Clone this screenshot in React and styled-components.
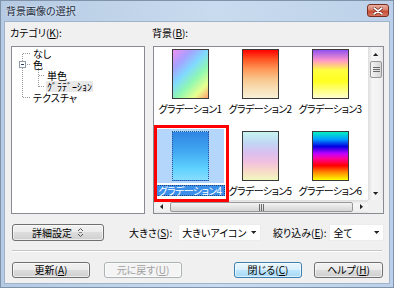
import styled, { createGlobalStyle } from 'styled-components';

const GlobalStyle = createGlobalStyle`
  html, body { margin: 0; padding: 0; }
  body {
    width: 394px;
    height: 288px;
    overflow: hidden;
    font-family: "Noto Sans CJK JP", "Noto Sans", sans-serif;
    font-size: 10px;
    font-feature-settings: "palt";
    color: #000;
  }
  * { box-sizing: border-box; }
`;

const Window = styled.div`
  width: 394px;
  height: 288px;
  display: flex;
  flex-direction: column;
  padding: 0 3px 3px 3px;
  border: 1px solid #7f93ab;
  background: linear-gradient(90deg, #b5cae3, #c9dbee 55%, #bcd1e9);
`;

const TitleBar = styled.div`
  height: 20px;
  display: flex;
  justify-content: space-between;
  align-items: flex-start;
`;

const Title = styled.div`
  padding-left: 2px;
  line-height: 19px;
  font-size: 10px;
  color: #1c2b3d;
  text-shadow: 0 0 3px rgba(255, 255, 255, 0.8);
`;

const CloseButton = styled.div`
  width: 22px;
  height: 13px;
  margin-top: 3px;
  margin-right: 1px;
  border: 1px solid #7a2c20;
  border-radius: 3px;
  background: linear-gradient(#eab0a2, #d9806d 45%, #c74b34 55%, #d8765f);
  display: flex;
  align-items: center;
  justify-content: center;
`;

const Client = styled.div`
  flex: 1;
  display: flex;
  flex-direction: column;
  background: #f0f0f0;
  border: 1px solid #9fb3cb;
  padding: 4px 5px 0 6px;
`;

const TopSection = styled.div`
  display: flex;
  gap: 8px;
`;

const Column = styled.div`
  display: flex;
  flex-direction: column;
  width: ${p => p.$w}px;
`;

const GroupLabel = styled.div`
  height: 13px;
  line-height: 13px;
  margin: 0 0 7px ${p => p.$ml || 0}px;
  white-space: nowrap;
`;

const TreeBox = styled.div`
  position: relative;
  height: 168px;
  border: 1px solid #898c95;
  background: #fff;
`;

const TreeLines = styled.svg`
  position: absolute;
  left: 0;
  top: 0;
`;

const TreeList = styled.ul`
  list-style: none;
  margin: 0;
  padding: 1px 0 0 0;
`;

const TreeItem = styled.li`
  height: 11px;
  line-height: 11px;
  padding-left: ${p => (p.$level === 1 ? 35 : 21)}px;
  white-space: nowrap;
`;

const TreeSelected = styled.span`
  display: inline-block;
  margin-left: -1px;
  padding: 0 1px;
  background: #e8e8e8;
`;

const ListBox = styled.div`
  position: relative;
  height: 168px;
  border: 1px solid #898c95;
  background: #fff;
  display: grid;
  grid-template-columns: 1fr 15px;
  grid-template-rows: 1fr 13px;
`;

const IconArea = styled.div`
  overflow: hidden;
  display: grid;
  grid-template-columns: repeat(3, 70px);
  row-gap: 15px;
  align-content: start;
  padding-left: 1px;
`;

const IconItem = styled.div`
  display: flex;
  flex-direction: column;
  align-items: center;
`;

const IconBox = styled.div`
  width: 67px;
  height: 54px;
  display: flex;
  align-items: center;
  justify-content: center;
  background: ${p => (p.$selected ? '#b4d6fa' : 'transparent')};
`;

const Thumb = styled.div`
  width: 37px;
  height: 50px;
  border: 1px ${p => (p.$selected ? 'dotted #1b3d8c' : 'solid #3a3a3a')};
  background: ${p => p.$bg};
  opacity: ${p => (p.$selected ? 0.85 : 1)};
`;

const IconLabel = styled.div`
  margin-top: 2px;
  height: 11px;
  line-height: 10px;
  padding: 0 2px;
  letter-spacing: -0.6px;
  white-space: nowrap;
  color: ${p => (p.$selected ? '#fff' : '#000')};
  background: ${p => (p.$selected ? '#3b8fe8' : 'transparent')};
  border: 1px dotted ${p => (p.$selected ? '#1a3f7a' : 'transparent')};
`;

const VScroll = styled.div`
  display: flex;
  flex-direction: column;
  background: linear-gradient(90deg, #e4e4e4, #f6f6f6 25%, #f1f1f1 80%, #e6e6e6);
  border-left: 1px solid #e0e0e0;
`;

const HScroll = styled.div`
  display: flex;
  background: linear-gradient(#e4e4e4, #f6f6f6 25%, #f1f1f1 80%, #e6e6e6);
  border-top: 1px solid #e0e0e0;
`;

const ArrowButton = styled.div`
  flex: 0 0 ${p => p.$size}px;
  display: flex;
  align-items: center;
  justify-content: center;
`;

const Track = styled.div`
  flex: 1;
`;

const ScrollThumb = styled.div`
  display: flex;
  align-items: center;
  justify-content: center;
  border: 1px solid #979797;
  border-radius: 2px;
  background: ${p =>
    p.$vertical
      ? 'linear-gradient(90deg, #f4f4f4, #e4e4e4 50%, #d6d6d6)'
      : 'linear-gradient(#f4f4f4, #e4e4e4 50%, #d6d6d6)'};
  ${p => (p.$vertical ? 'height: 17px; margin: 0 1px;' : 'flex: 1; margin: 1px 1px;')}
`;

const Corner = styled.div`
  background: #f0f0f0;
`;

const Annotation = styled.div`
  position: absolute;
  left: 0;
  top: 78px;
  width: 75px;
  height: 77px;
  border: 3px solid #ff0000;
  pointer-events: none;
`;

const ControlsRow = styled.div`
  display: flex;
  align-items: center;
  margin: 10px 0 0 1px;
  height: 17px;
`;

const Button = styled.div`
  width: ${p => p.$w}px;
  height: ${p => p.$h || 16}px;
  margin-left: ${p => p.$ml || 0}px;
  display: flex;
  align-items: center;
  justify-content: center;
  gap: 5px;
  border: 1px solid ${p => (p.$default ? '#3c7fb1' : p.$disabled ? '#adb2b5' : '#707070')};
  border-radius: 3px;
  color: ${p => (p.$disabled ? '#a0a0a0' : '#000')};
  background: ${p =>
    p.$default
      ? 'linear-gradient(#eaf6fd, #d9f0fc 50%, #bee6fd 50%, #a7d9f5)'
      : p.$disabled
        ? '#f4f4f4'
        : 'linear-gradient(#f2f2f2, #ebebeb 50%, #dddddd 50%, #cfcfcf)'};
  box-shadow: inset 0 0 0 1px rgba(255, 255, 255, 0.6);
  white-space: nowrap;
`;

const ButtonText = styled.span`
  line-height: 12px;
`;

const FieldLabel = styled.span`
  margin-left: ${p => p.$ml}px;
  white-space: nowrap;
`;

const Select = styled.div`
  width: ${p => p.$w}px;
  height: 17px;
  margin-left: ${p => p.$ml}px;
  display: flex;
  align-items: center;
  justify-content: space-between;
  padding: 0 4px 0 3px;
  background: #fff;
  border: 1px solid #ececec;
  white-space: nowrap;
`;

const Separator = styled.div`
  margin: 9px 2px 0 1px;
  border-top: 1px solid #c6c6c6;
  border-bottom: 1px solid #fff;
`;

const ButtonRow = styled.div`
  display: flex;
  margin: 10px 1px 0 1px;
`;

const Spacer = styled.div`
  flex: 1;
`;

const Tri = ({ dir }) => {
  const pts = {
    up: '0,4 3.5,0 7,4',
    down: '0,0 3.5,4 7,0',
    left: '4,0 0,3.5 4,7',
    right: '0,0 4,3.5 0,7',
  }[dir];
  const w = dir === 'up' || dir === 'down' ? 7 : 4;
  const h = dir === 'up' || dir === 'down' ? 4 : 7;
  return (
    <svg width={w * 0.75} height={h * 0.75} viewBox={`0 0 ${w} ${h}`}>
      <polygon points={pts} fill="#222" />
    </svg>
  );
};

const Grip = ({ vertical }) => (
  <svg width={vertical ? 7 : 5} height={vertical ? 5 : 7}>
    {[0, 2, 4].map(i =>
      vertical ? (
        <line key={i} x1="0" x2="7" y1={i + 0.5} y2={i + 0.5} stroke="#6b6b6b" />
      ) : (
        <line key={i} y1="0" y2="7" x1={i + 0.5} x2={i + 0.5} stroke="#6b6b6b" />
      ),
    )}
  </svg>
);

const items = [
  { name: 'グラデーション1', bg: 'linear-gradient(135deg, #f090f0 0%, #a8a0ff 22%, #80d8ff 42%, #90f8b0 62%, #e8ff90 82%, #ffa070 100%)' },
  { name: 'グラデーション2', bg: 'linear-gradient(180deg, #ff0000 0%, #ff5020 18%, #ff9858 40%, #f8c890 62%, #f8e0b8 82%, #f8f0d8 100%)' },
  { name: 'グラデーション3', bg: 'linear-gradient(180deg, #9050f0 0%, #ff98c8 22%, #ffff40 42%, #ffff20 65%, #ffffd0 100%)' },
  { name: 'グラデーション4', bg: 'linear-gradient(180deg, #1878e0 0%, #2ea0f0 40%, #50d0ff 75%, #80e0ff 100%)', selected: true },
  { name: 'グラデーション5', bg: 'linear-gradient(180deg, #c8f4f0 0%, #c0d8f4 22%, #d8c0f0 42%, #f0c0e0 62%, #f8d8c8 80%, #f0f8c0 100%)' },
  { name: 'グラデーション6', bg: 'linear-gradient(180deg, #00f0c0 0%, #00a0ff 15%, #0000e0 30%, #c000ff 45%, #ff00a0 55%, #ff0000 70%, #ff8000 83%, #ffff00 100%)' },
];

const dot = { stroke: '#9a9a9a', strokeDasharray: '1 1', shapeRendering: 'crispEdges' };

const App = () => (
  <>
    <GlobalStyle />
    <Window>
      <TitleBar>
        <Title>背景画像の選択</Title>
        <CloseButton>
          <svg width="10" height="8" viewBox="0 0 10 8">
            <path d="M1 1 L9 7 M9 1 L1 7" stroke="#5a1a10" strokeWidth="3" strokeLinecap="round" />
            <path d="M1 1 L9 7 M9 1 L1 7" stroke="#fff" strokeWidth="1.6" strokeLinecap="round" />
          </svg>
        </CloseButton>
      </TitleBar>
      <Client>
        <TopSection>
          <Column $w={134}>
            <GroupLabel $ml={-1}>カテゴリ(<u>K</u>):</GroupLabel>
            <TreeBox>
              <TreeLines width="40" height="60">
                <line x1="10.5" x2="10.5" y1="6.5" y2="50.5" {...dot} />
                <line x1="10.5" x2="19" y1="6.5" y2="6.5" {...dot} />
                <line x1="13" x2="19" y1="17.5" y2="17.5" {...dot} />
                <line x1="10.5" x2="19" y1="50.5" y2="50.5" {...dot} />
                <line x1="26.5" x2="26.5" y1="21" y2="39.5" {...dot} />
                <line x1="26.5" x2="33" y1="28.5" y2="28.5" {...dot} />
                <line x1="26.5" x2="33" y1="39.5" y2="39.5" {...dot} />
                <rect x="7.5" y="14.5" width="6" height="6" fill="#fff" stroke="#909aa8" shapeRendering="crispEdges" />
                <line x1="9" x2="12" y1="17.5" y2="17.5" stroke="#2a3a5a" shapeRendering="crispEdges" />
              </TreeLines>
              <TreeList>
                <TreeItem>なし</TreeItem>
                <TreeItem>色</TreeItem>
                <TreeItem $level={1}>単色</TreeItem>
                <TreeItem $level={1}>
                  <TreeSelected>ｸﾞﾗﾃﾞｰｼｮﾝ</TreeSelected>
                </TreeItem>
                <TreeItem>テクスチャ</TreeItem>
              </TreeList>
            </TreeBox>
          </Column>
          <Column $w={231}>
            <GroupLabel $ml={-1}>背景(<u>B</u>):</GroupLabel>
            <ListBox>
              <IconArea>
                {items.map(it => (
                  <IconItem key={it.name}>
                    <IconBox $selected={it.selected}>
                      <Thumb $bg={it.bg} $selected={it.selected} />
                    </IconBox>
                    <IconLabel $selected={it.selected}>{it.name}</IconLabel>
                  </IconItem>
                ))}
              </IconArea>
              <VScroll>
                <ArrowButton $size={14}>
                  <Tri dir="up" />
                </ArrowButton>
                <ScrollThumb $vertical>
                  <Grip vertical />
                </ScrollThumb>
                <Track />
                <ArrowButton $size={14}>
                  <Tri dir="down" />
                </ArrowButton>
              </VScroll>
              <HScroll>
                <ArrowButton $size={15}>
                  <Tri dir="left" />
                </ArrowButton>
                <ScrollThumb>
                  <Grip />
                </ScrollThumb>
                <ArrowButton $size={14}>
                  <Tri dir="right" />
                </ArrowButton>
              </HScroll>
              <Corner />
              <Annotation />
            </ListBox>
          </Column>
        </TopSection>
        <ControlsRow>
          <Button $w={95} $h={17}>
            <ButtonText>詳細設定</ButtonText>
            <svg width="7" height="11" viewBox="0 0 7 11">
              <path d="M1 4 L3.5 1.5 L6 4 M1 7 L3.5 9.5 L6 7" stroke="#555" fill="none" />
              <path d="M2 5.5 H5" stroke="#888" />
            </svg>
          </Button>
          <FieldLabel $ml={25}>大きさ(<u>S</u>):</FieldLabel>
          <Select $w={85} $ml={6}>
            大きいアイコン
            <Tri dir="down" />
          </Select>
          <FieldLabel $ml={12}>絞り込み(<u>E</u>):</FieldLabel>
          <Select $w={56} $ml={3}>
            全て
            <Tri dir="down" />
          </Select>
        </ControlsRow>
        <Separator />
        <ButtonRow>
          <Button $w={78}>
            <ButtonText>更新(<u>A</u>)</ButtonText>
          </Button>
          <Button $w={78} $ml={14} $disabled>
            <ButtonText>元に戻す(<u>U</u>)</ButtonText>
          </Button>
          <Spacer />
          <Button $w={68} $default>
            <ButtonText>閉じる(<u>C</u>)</ButtonText>
          </Button>
          <Button $w={69} $ml={12}>
            <ButtonText>ヘルプ(<u>H</u>)</ButtonText>
          </Button>
        </ButtonRow>
      </Client>
    </Window>
  </>
);

export default App;
